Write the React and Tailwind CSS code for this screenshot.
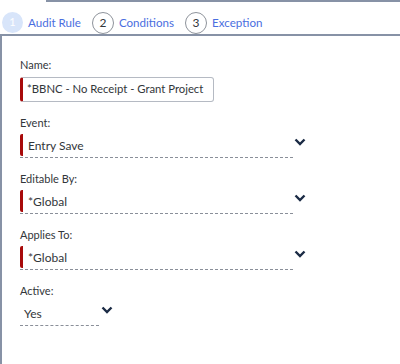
const font = { fontFamily: "Lato, 'Open Sans', sans-serif" };

function Chevron({ className }) {
  return (
    <svg width="12" height="8" viewBox="0 0 12 8" className={className}>
      <path d="M1.5 1.5 L6 6 L10.5 1.5" fill="none" stroke="#1b2b45" strokeWidth="2.4" />
    </svg>
  );
}

function Step({ n, label, active }) {
  return (
    <div className="flex items-center">
      <div
        className={
          active
            ? "w-[21px] h-[21px] rounded-full bg-[#d8e5fa] text-white flex items-center justify-center text-[11px]"
            : "w-[22px] h-[22px] rounded-full border border-[#8e939b] text-[#32363a] flex items-center justify-center text-[12px]"
        }
      >
        {n}
      </div>
      <span className="ml-[5px] text-[11.6px] text-[#4a6ee0]">{label}</span>
    </div>
  );
}

function SelectField({ label, value, required, width = "w-[273px]", chevronGap = "ml-[1px]", last }) {
  return (
    <div className={last ? "" : "mb-[14px]"}>
      <div className="h-[14px] leading-[14px] text-[11px] text-[#32363a]">{label}</div>
      <div className="flex items-start mt-[4px]">
        <div className={`relative h-[24px] border-b border-dashed border-[#8a8f99] ${width}`}>
          {required && (
            <div className="absolute left-0 top-0 w-[3px] h-[22px] bg-[#a80a0a] rounded-l-[2px]" />
          )}
          <div className={`${required ? "pl-[8px]" : "pl-[4px]"} pt-[4px] text-[12px] leading-[16px] text-[#32363a]`}>
            {value}
          </div>
        </div>
        <Chevron className={`${chevronGap} mt-[4px]`} />
      </div>
    </div>
  );
}

export default function App() {
  return (
    <div className="w-[400px] h-[364px] bg-white overflow-hidden" style={font}>
      <div className="ml-[46px] h-[2px] bg-[#8792a6]" />
      <div className="flex items-center gap-[11px] h-[32px] pt-[9px] pl-[2px]">
        <Step n="1" label="Audit Rule" active />
        <Step n="2" label="Conditions" />
        <Step n="3" label="Exception" />
      </div>
      <div className="border-l-2 border-t-2 border-[#8792a6] h-[330px] pl-[18px] pt-[22px]">
        <div className="mb-[14px]">
          <div className="h-[14px] leading-[14px] text-[11px] text-[#32363a]">Name:</div>
          <div className="mt-[5px] w-[194px] h-[25px] border border-[#b5bac3] border-l-[3px] border-l-[#a80a0a] rounded-[3px] pl-[4px] flex items-center text-[11.3px] text-[#32363a] whitespace-nowrap overflow-hidden">
            *BBNC - No Receipt - Grant Project
          </div>
        </div>
        <SelectField label="Event:" value="Entry Save" required />
        <SelectField label="Editable By:" value="*Global" required />
        <SelectField label="Applies To:" value="*Global" required />
        <SelectField label="Active:" value="Yes" width="w-[79px]" chevronGap="ml-[2px]" last />
      </div>
    </div>
  );
}
